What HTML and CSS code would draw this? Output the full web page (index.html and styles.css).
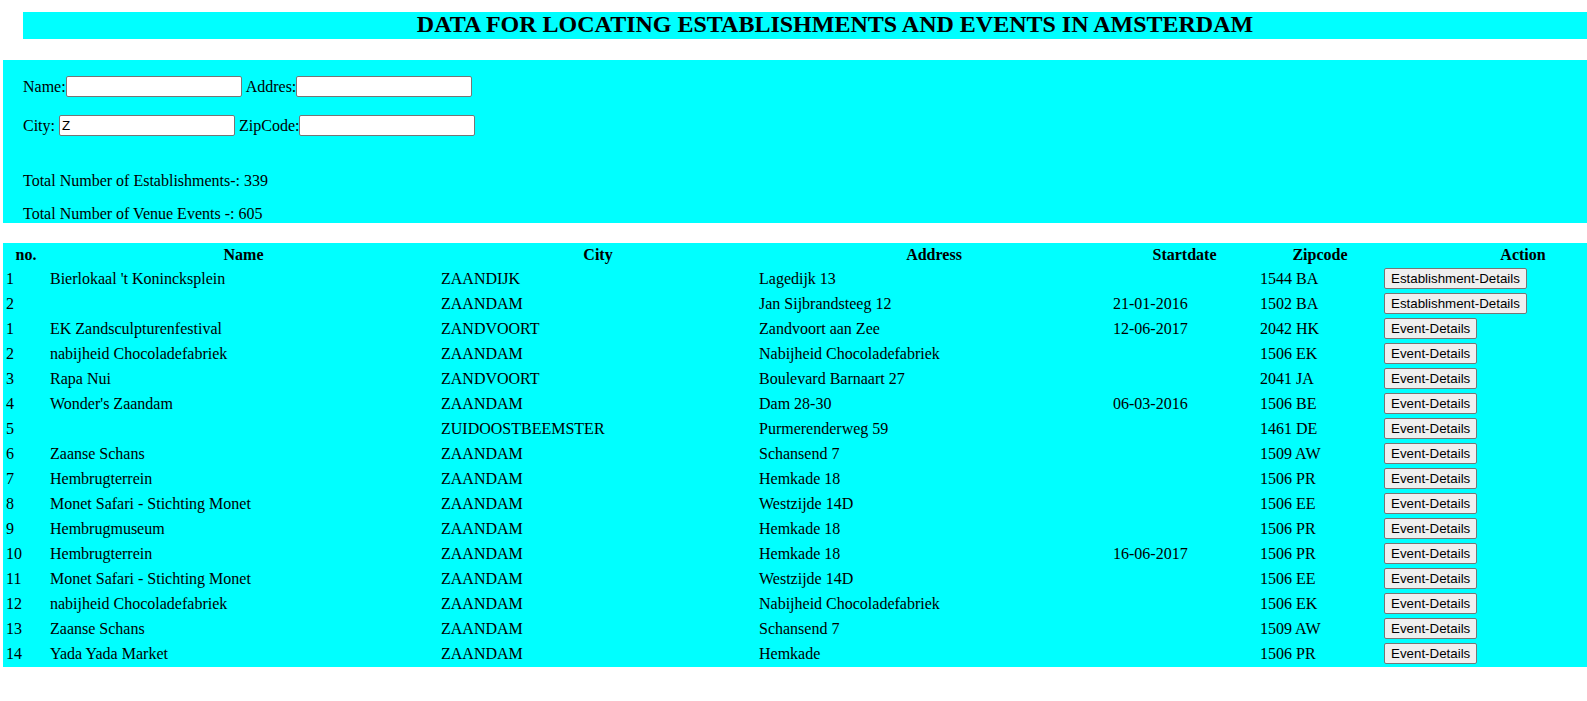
FILE: index.html
```html
<!DOCTYPE html>
<html lang="en">
<head>
<meta charset="utf-8">
<title>Amsterdam establishments and events</title>
<link rel="stylesheet" href="styles.css">
</head>
<body>
<h2 class="page-title">DATA FOR LOCATING ESTABLISHMENTS AND EVENTS IN AMSTERDAM</h2>

<section class="filters">
  <div class="filter-row">
    <label class="field"><span class="field-label">Name:</span><input class="field-input" type="text"></label>
    <label class="field"><span class="field-label">Addres:</span><input class="field-input" type="text"></label>
  </div>
  <div class="filter-row">
    <label class="field"><span class="field-label spaced">City:</span><input class="field-input" type="text" value="Z"></label>
    <label class="field"><span class="field-label">ZipCode:</span><input class="field-input" type="text"></label>
  </div>
  <p class="total first">Total Number of Establishments-: 339</p>
  <p class="total last">Total Number of Venue Events -: 605</p>
</section>

<table class="results">
  <colgroup>
    <col class="c-no"><col class="c-name"><col class="c-city"><col class="c-addr"><col class="c-date"><col class="c-zip"><col class="c-act">
  </colgroup>
  <thead>
    <tr><th>no.</th><th>Name</th><th>City</th><th>Address</th><th>Startdate</th><th>Zipcode</th><th>Action</th></tr>
  </thead>
  <tbody>
    <tr><td>1</td><td>Bierlokaal 't Konincksplein</td><td>ZAANDIJK</td><td>Lagedijk 13</td><td></td><td>1544 BA</td><td><button class="btn">Establishment-Details</button></td></tr>
    <tr><td>2</td><td></td><td>ZAANDAM</td><td>Jan Sijbrandsteeg 12</td><td>21-01-2016</td><td>1502 BA</td><td><button class="btn">Establishment-Details</button></td></tr>
    <tr><td>1</td><td>EK Zandsculpturenfestival</td><td>ZANDVOORT</td><td>Zandvoort aan Zee</td><td>12-06-2017</td><td>2042 HK</td><td><button class="btn">Event-Details</button></td></tr>
    <tr><td>2</td><td>nabijheid Chocoladefabriek</td><td>ZAANDAM</td><td>Nabijheid Chocoladefabriek</td><td></td><td>1506 EK</td><td><button class="btn">Event-Details</button></td></tr>
    <tr><td>3</td><td>Rapa Nui</td><td>ZANDVOORT</td><td>Boulevard Barnaart 27</td><td></td><td>2041 JA</td><td><button class="btn">Event-Details</button></td></tr>
    <tr><td>4</td><td>Wonder's Zaandam</td><td>ZAANDAM</td><td>Dam 28-30</td><td>06-03-2016</td><td>1506 BE</td><td><button class="btn">Event-Details</button></td></tr>
    <tr><td>5</td><td></td><td>ZUIDOOSTBEEMSTER</td><td>Purmerenderweg 59</td><td></td><td>1461 DE</td><td><button class="btn">Event-Details</button></td></tr>
    <tr><td>6</td><td>Zaanse Schans</td><td>ZAANDAM</td><td>Schansend 7</td><td></td><td>1509 AW</td><td><button class="btn">Event-Details</button></td></tr>
    <tr><td>7</td><td>Hembrugterrein</td><td>ZAANDAM</td><td>Hemkade 18</td><td></td><td>1506 PR</td><td><button class="btn">Event-Details</button></td></tr>
    <tr><td>8</td><td>Monet Safari - Stichting Monet</td><td>ZAANDAM</td><td>Westzijde 14D</td><td></td><td>1506 EE</td><td><button class="btn">Event-Details</button></td></tr>
    <tr><td>9</td><td>Hembrugmuseum</td><td>ZAANDAM</td><td>Hemkade 18</td><td></td><td>1506 PR</td><td><button class="btn">Event-Details</button></td></tr>
    <tr><td>10</td><td>Hembrugterrein</td><td>ZAANDAM</td><td>Hemkade 18</td><td>16-06-2017</td><td>1506 PR</td><td><button class="btn">Event-Details</button></td></tr>
    <tr><td>11</td><td>Monet Safari - Stichting Monet</td><td>ZAANDAM</td><td>Westzijde 14D</td><td></td><td>1506 EE</td><td><button class="btn">Event-Details</button></td></tr>
    <tr><td>12</td><td>nabijheid Chocoladefabriek</td><td>ZAANDAM</td><td>Nabijheid Chocoladefabriek</td><td></td><td>1506 EK</td><td><button class="btn">Event-Details</button></td></tr>
    <tr><td>13</td><td>Zaanse Schans</td><td>ZAANDAM</td><td>Schansend 7</td><td></td><td>1509 AW</td><td><button class="btn">Event-Details</button></td></tr>
    <tr><td>14</td><td>Yada Yada Market</td><td>ZAANDAM</td><td>Hemkade</td><td></td><td>1506 PR</td><td><button class="btn">Event-Details</button></td></tr>
  </tbody>
</table>
</body>
</html>
```

FILE: styles.css
```css
html, body {
  overflow-x: hidden;
}

body {
  margin: 0;
  padding: 12px 0 0 3px;
  background: #ffffff;
  color: #000000;
  font-family: "Liberation Serif", "Times New Roman", serif;
  font-size: 16px;
}

.page-title {
  margin: 0 0 0 20px;
  width: 1624px;
  height: 27px;
  background: #00ffff;
  font-size: 24px;
  font-weight: bold;
  line-height: 25px;
  text-align: center;
}

.filters {
  margin-top: 21px;
  width: 1662px;
  padding: 16px 20px 0;
  box-sizing: border-box;
  background: #00ffff;
}

.filter-row {
  display: flex;
  align-items: center;
  gap: 4px;
  height: 21px;
  margin-bottom: 18px;
}

.filter-row + .filter-row {
  margin-bottom: 0;
}

.field {
  display: flex;
  align-items: center;
}

.field-label.spaced {
  margin-right: 4px;
}

.field-input {
  box-sizing: border-box;
  width: 176px;
  height: 21px;
  margin: 0;
  padding: 1px 2px;
  border: 1px solid #767676;
  border-radius: 2px;
  background: #ffffff;
  font-family: "Liberation Sans", Arial, sans-serif;
  font-size: 13.333px;
  color: #000000;
}

.total {
  margin: 16px 0 0;
  line-height: 18px;
}

.total.first {
  margin-top: 36px;
}

.total.last {
  margin-top: 15px;
}

.results {
  margin-top: 20px;
  table-layout: fixed;
  width: 1662px;
  border-spacing: 2px;
  background: #00ffff;
  font-size: 16px;
}

.c-no { width: 42px; }
.c-name { width: 389px; }
.c-city { width: 316px; }
.c-addr { width: 352px; }
.c-date { width: 145px; }
.c-zip { width: 122px; }
.c-act { width: 280px; }

.results th,
.results td {
  padding: 1px;
  white-space: nowrap;
  vertical-align: middle;
}

.results th {
  font-weight: bold;
  text-align: center;
  line-height: 18px;
}

.results td {
  text-align: left;
  line-height: 18px;
  height: 21px;
}

.btn {
  box-sizing: border-box;
  height: 21px;
  margin: 0;
  padding: 1px 6px;
  border: 1px solid #767676;
  border-radius: 2px;
  background: #efefef;
  color: #000000;
  font-family: "Liberation Sans", Arial, sans-serif;
  font-size: 13.333px;
  line-height: 15px;
  vertical-align: middle;
}
```
